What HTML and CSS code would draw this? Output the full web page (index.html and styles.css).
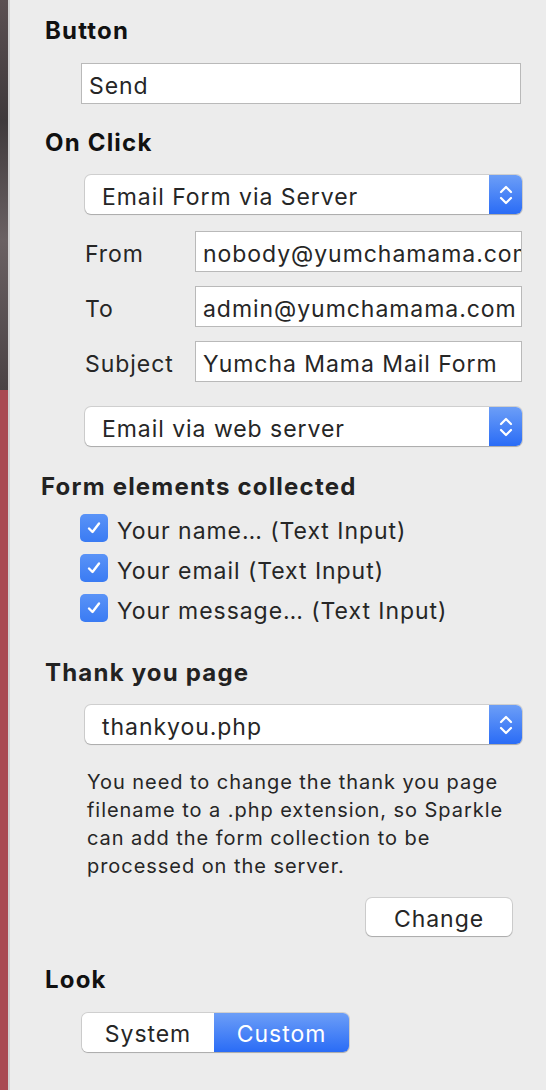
FILE: index.html
```html
<!DOCTYPE html>
<html>
<head>
  <meta name="viewport" content="width=device-width, initial-scale=1">
  <link rel="stylesheet" href="styles.css">
</head>
<body>
  <div class="window">
    <div class="backdrop"></div>

    <div class="inspector">
      <!-- Button text -->
      <h2 class="section-title">Button</h2>
      <div class="text-field wide">Send</div>

      <!-- On Click action -->
      <h2 class="section-title gap-top">On Click</h2>
      <div class="popup">
        <span class="popup-label">Email Form via Server</span>
        <span class="stepper">
          <svg width="14" height="22" viewBox="0 0 14 22"><path d="M2 8 L7 3 L12 8 M2 14 L7 19 L12 14" fill="none" stroke="#fff" stroke-width="2.2" stroke-linecap="round" stroke-linejoin="round"/></svg>
        </span>
      </div>

      <div class="mail-rows">
        <div class="mail-row">
          <span class="row-label">From</span>
          <div class="text-field">nobody@yumchamama.com</div>
        </div>
        <div class="mail-row">
          <span class="row-label">To</span>
          <div class="text-field">admin@yumchamama.com</div>
        </div>
        <div class="mail-row">
          <span class="row-label">Subject</span>
          <div class="text-field">Yumcha Mama Mail Form</div>
        </div>
      </div>

      <div class="popup spaced">
        <span class="popup-label">Email via web server</span>
        <span class="stepper">
          <svg width="14" height="22" viewBox="0 0 14 22"><path d="M2 8 L7 3 L12 8 M2 14 L7 19 L12 14" fill="none" stroke="#fff" stroke-width="2.2" stroke-linecap="round" stroke-linejoin="round"/></svg>
        </span>
      </div>

      <!-- Collected form elements -->
      <h2 class="section-title outdent">Form elements collected</h2>
      <ul class="check-list">
        <li>
          <span class="checkbox"><svg width="18" height="18" viewBox="0 0 18 18"><path d="M4 9.5 L7.5 13 L14 4.5" fill="none" stroke="#fff" stroke-width="2.4" stroke-linecap="round" stroke-linejoin="round"/></svg></span>
          <span class="check-text">Your name… (Text Input)</span>
        </li>
        <li>
          <span class="checkbox"><svg width="18" height="18" viewBox="0 0 18 18"><path d="M4 9.5 L7.5 13 L14 4.5" fill="none" stroke="#fff" stroke-width="2.4" stroke-linecap="round" stroke-linejoin="round"/></svg></span>
          <span class="check-text">Your email (Text Input)</span>
        </li>
        <li>
          <span class="checkbox"><svg width="18" height="18" viewBox="0 0 18 18"><path d="M4 9.5 L7.5 13 L14 4.5" fill="none" stroke="#fff" stroke-width="2.4" stroke-linecap="round" stroke-linejoin="round"/></svg></span>
          <span class="check-text">Your message… (Text Input)</span>
        </li>
      </ul>

      <!-- Thank you page -->
      <h2 class="section-title thanks-title">Thank you page</h2>
      <div class="popup">
        <span class="popup-label">thankyou.php</span>
        <span class="stepper">
          <svg width="14" height="22" viewBox="0 0 14 22"><path d="M2 8 L7 3 L12 8 M2 14 L7 19 L12 14" fill="none" stroke="#fff" stroke-width="2.2" stroke-linecap="round" stroke-linejoin="round"/></svg>
        </span>
      </div>
      <p class="note">You need to change the thank you page<br>filename to a .php extension, so Sparkle<br>can add the form collection to be<br>processed on the server.</p>
      <div class="button-row">
        <button class="push-button">Change</button>
      </div>

      <!-- Look -->
      <h2 class="section-title look-title">Look</h2>
      <div class="segmented">
        <span class="segment">System</span>
        <span class="segment selected">Custom</span>
      </div>
    </div>
  </div>
</body>
</html>
```

FILE: styles.css
```css
/* Base */
body {
  margin: 0;
  padding: 0;
  font-family: Inter, "Noto Sans", sans-serif;
  color: #262626;
  background: #ececec;
}
.window {
  display: flex;
  min-height: 1090px;
}
/* Slice of the canvas visible at the left edge */
.backdrop {
  width: 8px;
  flex-shrink: 0;
  background:
    linear-gradient(to bottom, #5b5052 0, #3f393b 120px, #6a6163 240px, #4a4244 390px, #a94a52 390px, #a94a52 100%);
  border-right: 2px solid #d2d2d2;
}
.inspector {
  flex: 1;
  min-width: 0;
  padding: 16px 0 0 35px;
  font-size: 23px;
  letter-spacing: 0.95px;
}
/* Headings */
.section-title {
  margin: 0;
  font-size: 24px;
  font-weight: 700;
  line-height: 30px;
  letter-spacing: 1.2px;
  color: #111;
}
.gap-top {
  margin-top: 24px;
}
.outdent {
  margin-top: 26px;
  margin-left: -4px;
  color: #222;
}
.thanks-title {
  margin-top: 30px;
  color: #222;
}
.look-title {
  margin-top: 29px;
}
/* Text fields */
.text-field {
  box-sizing: border-box;
  height: 41px;
  min-width: 0;
  background: #fff;
  border: 1px solid #b9b9b9;
  padding: 7px 7px 0;
  line-height: 31px;
  white-space: nowrap;
  overflow: hidden;
}
.text-field.wide {
  margin: 17px 25px 0 36px;
}
/* Popup buttons */
.popup {
  box-sizing: border-box;
  height: 39px;
  margin: 17px 24px 0 40px;
  display: flex;
  align-items: stretch;
  background: #fff;
  border-radius: 6px;
  box-shadow: 0 0 0 1px rgba(0,0,0,0.12), 0 1px 1px rgba(0,0,0,0.18);
  overflow: hidden;
}
.popup.spaced {
  margin-top: 25px;
}
.popup-label {
  flex: 1;
  padding: 6px 0 0 17px;
  line-height: 33px;
}
.stepper {
  width: 33px;
  display: flex;
  align-items: center;
  justify-content: center;
  background: linear-gradient(to bottom, #6c9ef7, #2a6cf6);
}
/* From / To / Subject */
.mail-rows {
  margin: 17px 24px 0 40px;
  display: flex;
  flex-direction: column;
  gap: 14px;
}
.mail-row {
  display: flex;
  align-items: center;
}
.row-label {
  width: 110px;
  flex-shrink: 0;
  padding-top: 4px;
}
.mail-row .text-field {
  flex: 1;
}
/* Checkbox list */
.check-list {
  list-style: none;
  margin: 6px 0 0 35px;
  padding: 0;
}
.check-list li {
  height: 40px;
  display: flex;
  align-items: center;
  gap: 9px;
}
.check-text {
  padding-top: 5px;
}
.checkbox {
  width: 28px;
  height: 28px;
  border-radius: 5px;
  background: linear-gradient(to bottom, #5a93f7, #3a7bf3);
  display: flex;
  align-items: center;
  justify-content: center;
}
/* Note */
.note {
  margin: 24px 0 0 42px;
  font-size: 20px;
  line-height: 28px;
  letter-spacing: 0.95px;
  color: #262626;
}
.button-row {
  margin-top: 18px;
  display: flex;
  justify-content: flex-end;
  padding-right: 34px;
}
.push-button {
  width: 146px;
  height: 38px;
  font-family: inherit;
  font-size: 23px;
  letter-spacing: 0.95px;
  color: #262626;
  background: #fff;
  border: none;
  border-radius: 6px;
  box-shadow: 0 0 0 1px rgba(0,0,0,0.12), 0 1px 1px rgba(0,0,0,0.18);
  padding: 4px 0 0;
}
/* Segmented control */
.segmented {
  margin: 18px 0 0 37px;
  display: inline-flex;
  height: 39px;
  border-radius: 6px;
  overflow: hidden;
  box-shadow: 0 0 0 1px rgba(0,0,0,0.12), 0 1px 1px rgba(0,0,0,0.18);
}
.segment {
  width: 132px;
  text-align: center;
  padding-top: 4px;
  line-height: 35px;
  background: #fff;
}
.segment.selected {
  width: 135px;
  color: #fff;
  background: linear-gradient(to bottom, #6c9ef7, #2a6cf6);
}
```
